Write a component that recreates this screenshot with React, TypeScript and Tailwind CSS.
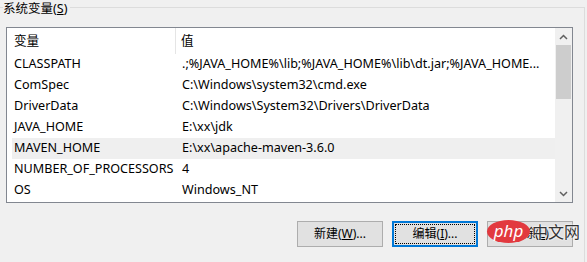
import React from 'react';

const rows: [string, string][] = [
  ['CLASSPATH', '.;%JAVA_HOME%\\lib;%JAVA_HOME%\\lib\\dt.jar;%JAVA_HOME...'],
  ['ComSpec', 'C:\\Windows\\system32\\cmd.exe'],
  ['DriverData', 'C:\\Windows\\System32\\Drivers\\DriverData'],
  ['JAVA_HOME', 'E:\\xx\\jdk'],
  ['MAVEN_HOME', 'E:\\xx\\apache-maven-3.6.0'],
  ['NUMBER_OF_PROCESSORS', '4'],
  ['OS', 'Windows_NT'],
];

const font = { fontFamily: '"Noto Sans", "Noto Sans CJK SC", sans-serif' };

function Btn({ label, focused }: { label: React.ReactNode; focused?: boolean }) {
  return (
    <div
      className={
        'w-[86px] h-[26px] flex items-center justify-center bg-[#e1e1e1] text-[12px] text-black ' +
        (focused ? 'border-2 border-[#0078d7] p-[1px]' : 'border border-[#adadad]')
      }
    >
      {focused ? (
        <div className="w-full h-full flex items-center justify-center border border-dotted border-black">{label}</div>
      ) : (
        label
      )}
    </div>
  );
}

export default function App() {
  return (
    <div className="relative w-[587px] h-[262px] bg-[#f0f0f0] overflow-hidden text-[12.6px] text-black" style={font}>
      <div className="absolute left-[3px] top-[1px] pr-[3px] bg-[#f0f0f0] leading-[16px] text-[12.5px] z-10">
        系统变量(<span className="underline">S</span>)
      </div>
      <div className="mt-[7px] ml-[-2px] w-[587px] h-[270px] border-t border-r border-[#dcdcdc] pt-[19px] pl-[8px]">
        <div className="w-[567px] h-[176px] border border-[#828790] bg-white flex">
          <div className="flex-1 flex flex-col">
            <div className="h-[26px] flex items-stretch">
              <div className="w-[169px] pl-[7px] flex items-center border-r border-[#e5e5e5]">变量</div>
              <div className="pl-[5px] flex items-center">值</div>
            </div>
            {rows.map(([k, v]) => (
              <div
                key={k}
                className={
                  'h-[21px] ml-[5px] flex items-center whitespace-nowrap ' +
                  (k === 'MAVEN_HOME' ? 'bg-[#efefef]' : '')
                }
              >
                <div className="w-[170px] pl-[2px]">{k}</div>
                <div>{v}</div>
              </div>
            ))}
          </div>
          <div className="w-[17px] bg-[#f0f0f0] flex flex-col items-center">
            <div className="h-[17px] w-full flex items-center justify-center">
              <svg width="9" height="6" viewBox="0 0 9 6">
                <path d="M1 5 L4.5 1.5 L8 5" fill="none" stroke="#606060" strokeWidth="1.5" />
              </svg>
            </div>
            <div className="w-[15px] h-[54px] bg-[#cdcdcd]" />
            <div className="flex-1" />
            <div className="h-[17px] w-full flex items-center justify-center">
              <svg width="9" height="6" viewBox="0 0 9 6">
                <path d="M1 1 L4.5 4.5 L8 1" fill="none" stroke="#606060" strokeWidth="1.5" />
              </svg>
            </div>
          </div>
        </div>
        <div className="mt-[18px] w-[567px] flex justify-end gap-[9px]">
          <Btn label={<span>新建(<span className="underline">W</span>)...</span>} />
          <Btn focused label={<span>编辑(<span className="underline">I</span>)...</span>} />
          <Btn label={<span>删除(<span className="underline">L</span>)</span>} />
        </div>
      </div>
      <div className="absolute left-[487px] top-[220px] flex items-center">
        <div className="w-[43px] h-[23px] rounded-[50%] bg-[#e2393f] flex items-center justify-center text-white text-[17px] leading-none pb-[3px] italic">
          php
        </div>
        <div
          className="ml-[2px] text-[16px] text-[#333] leading-none"
          style={{ textShadow: '0 0 2px #fff, 0 0 2px #fff' }}
        >
          中文网
        </div>
      </div>
    </div>
  );
}
